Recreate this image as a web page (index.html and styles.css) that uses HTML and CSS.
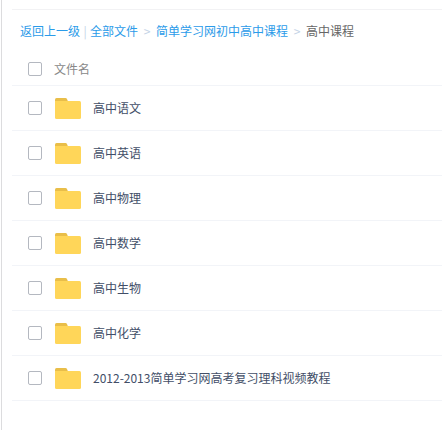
FILE: index.html
```html
<!DOCTYPE html>
<html lang="zh-CN">
<head>
    <meta charset="UTF-8">
    <meta name="viewport" content="width=device-width, initial-scale=1.0">
    <title>高中课程</title>
    <link rel="stylesheet" href="styles.css">
</head>
<body>

    <svg width="0" height="0" class="sprite" aria-hidden="true">
        <symbol id="folder" viewBox="0 0 26 21">
            <path fill="#e9be49" d="M1.500 0H10.500Q11.500 0 12 1L13 3.500V8H0V1.500Q0 0 1.500 0Z"/>
            <path fill="#ffd659" d="M0 3H24.500Q26 3 26 4.500V19.500Q26 21 24.500 21H1.500Q0 21 0 19.500Z"/>
        </symbol>
    </svg>

    <main class="content">
        <nav class="breadcrumb">
            <a href="#">返回上一级</a>
            <span class="divider">|</span>
            <a href="#">全部文件</a>
            <span class="arrow">&gt;</span>
            <a href="#">简单学习网初中高中课程</a>
            <span class="arrow">&gt;</span>
            <span class="current">高中课程</span>
        </nav>

        <div class="list-header">
            <input type="checkbox" id="all" class="check">
            <label for="all">文件名</label>
        </div>

        <ul class="file-list">
            <li class="file">
                <input type="checkbox" id="f1" class="check">
                <svg class="icon"><use href="#folder"/></svg>
                <label for="f1">高中语文</label>
            </li>
            <li class="file">
                <input type="checkbox" id="f2" class="check">
                <svg class="icon"><use href="#folder"/></svg>
                <label for="f2">高中英语</label>
            </li>
            <li class="file">
                <input type="checkbox" id="f3" class="check">
                <svg class="icon"><use href="#folder"/></svg>
                <label for="f3">高中物理</label>
            </li>
            <li class="file">
                <input type="checkbox" id="f4" class="check">
                <svg class="icon"><use href="#folder"/></svg>
                <label for="f4">高中数学</label>
            </li>
            <li class="file">
                <input type="checkbox" id="f5" class="check">
                <svg class="icon"><use href="#folder"/></svg>
                <label for="f5">高中生物</label>
            </li>
            <li class="file">
                <input type="checkbox" id="f6" class="check">
                <svg class="icon"><use href="#folder"/></svg>
                <label for="f6">高中化学</label>
            </li>
            <li class="file">
                <input type="checkbox" id="f7" class="check">
                <svg class="icon"><use href="#folder"/></svg>
                <label for="f7">2012-2013简单学习网高考复习理科视频教程</label>
            </li>
        </ul>
    </main>

</body>
</html>
```
FILE: styles.css
```css
* {
    box-sizing: border-box;
}
body {
    margin: 0;
    background-color: #fff;
    font-family: "Noto Sans CJK SC", sans-serif;
    font-size: 12px;
    line-height: 18px;
    color: #424e67;
}
.sprite {
    position: absolute;
}
.content {
    min-height: 100vh;
    margin-left: 1px;
    padding: 9px 0 0 10px;
    border-left: 1px solid #dcdcde;
}
.breadcrumb {
    display: flex;
    align-items: center;
    height: 43px;
    padding-left: 8px;
    border-top: 1px solid #f2f2f4;
    white-space: nowrap;
}
.breadcrumb a {
    color: #2b9be9;
    text-decoration: none;
}
.breadcrumb a:hover {
    text-decoration: underline;
}
.divider,
.arrow {
    text-align: center;
    color: #c4d3e6;
}
.divider {
    width: 10px;
}
.arrow {
    width: 18px;
}
.current {
    color: #666;
}

.list-header,
.file {
    display: flex;
    align-items: center;
    padding-left: 16px;
    border-bottom: 1px solid #f2f4f8;
}
.list-header {
    height: 34px;
    color: #888;
}
.file-list {
    margin: 0;
    padding: 0;
    list-style: none;
}
.file {
    height: 45px;
}
.check {
    appearance: none;
    flex: none;
    width: 14px;
    height: 14px;
    margin: 0 12px 0 0;
    border: 1px solid #b4b8c0;
    border-radius: 2px;
    background-color: #fff;
}
.check:checked {
    border-color: #2b9be9;
    background-color: #2b9be9;
}
.icon {
    flex: none;
    width: 26px;
    height: 21px;
    margin: 0 12px 0 1px;
}
```
